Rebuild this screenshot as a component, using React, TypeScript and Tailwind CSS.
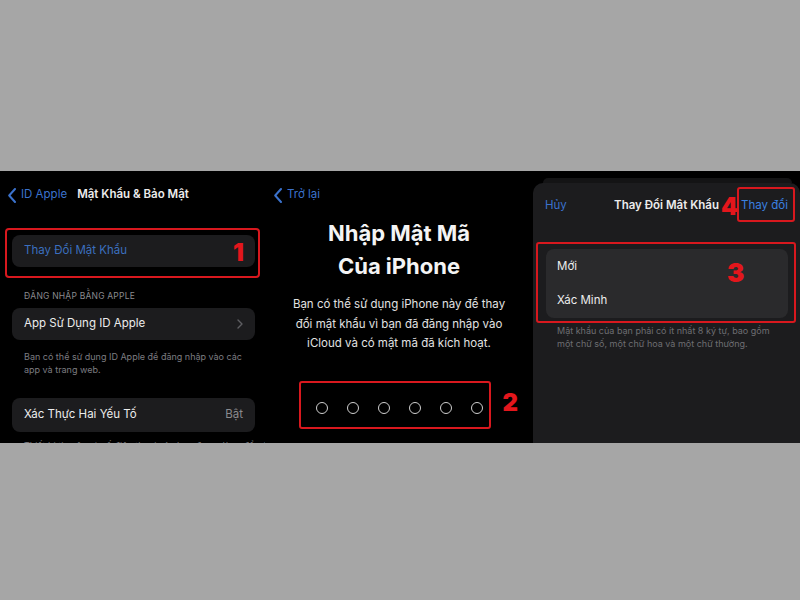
import React from 'react';

const font = { fontFamily: 'Inter, "Noto Sans", "Liberation Sans", sans-serif' };

const BackChevron: React.FC = () => (
  <svg width="8" height="15" viewBox="0 0 8 15" fill="none" className="shrink-0">
    <path d="M7 1 L1.2 7.5 L7 14" stroke="#3b72cc" strokeWidth="2" strokeLinecap="round" strokeLinejoin="round" />
  </svg>
);

const RowChevron: React.FC = () => (
  <svg width="6" height="10" viewBox="0 0 6 10" fill="none">
    <path d="M1 1 L5 5 L1 9" stroke="#5e5e62" strokeWidth="1.4" strokeLinecap="round" strokeLinejoin="round" />
  </svg>
);

// red step marker drawn over the screenshots
const Step: React.FC<{ n: string; className: string }> = ({ n, className }) => (
  <span className={`absolute font-black text-[#e3161c] leading-none ${className}`}>{n}</span>
);

const SettingsPanel: React.FC = () => (
  <div className="w-[265px] shrink-0 bg-black flex flex-col *:shrink-0">
    <div className="mt-[14px] h-[20px] flex items-center pl-[8px]">
      <BackChevron />
      <span className="ml-[5px] text-[11.5px] text-[#3b72cc]">ID Apple</span>
      <span className="ml-[10px] text-[11.5px] font-semibold text-[#ececec]">Mật Khẩu &amp; Bảo Mật</span>
    </div>

    <div className="relative mt-[30px] ml-[12px] w-[243px] h-[32px] rounded-[8px] bg-[#1c1c1e] flex items-center pl-[12px]">
      <span className="text-[11.5px] text-[#3b6fbf]">Thay Đổi Mật Khẩu</span>
      <div className="absolute -left-[7px] -top-[7px] -right-[5px] -bottom-[11px] border-2 border-[#d8181e] rounded-[4px]" />
      <Step n="1" className="left-[221px] top-[6px] text-[24px]" />
    </div>

    <div className="mt-[23px] pl-[24px] h-[12px] text-[8.5px] leading-[12px] tracking-wide text-[#8a8a8e]">ĐĂNG NHẬP BẰNG APPLE</div>

    <div className="mt-[6px] ml-[12px] w-[243px] h-[32px] rounded-[8px] bg-[#1c1c1e] flex items-center justify-between pl-[12px] pr-[12px]">
      <span className="text-[11.5px] text-[#ececec]">App Sử Dụng ID Apple</span>
      <RowChevron />
    </div>

    <p className="mt-[10px] pl-[24px] text-[9px] leading-[13px] text-[#7c7c80]">
      Bạn có thể sử dụng ID Apple để đăng nhập vào các
      <br />
      app và trang web.
    </p>

    <div className="mt-[22px] ml-[12px] w-[243px] h-[34px] rounded-[8px] bg-[#1c1c1e] flex items-center justify-between pl-[12px] pr-[12px]">
      <span className="text-[11.5px] text-[#ececec]">Xác Thực Hai Yếu Tố</span>
      <span className="text-[11.5px] text-[#8a8a8e]">Bật</span>
    </div>

    <p className="mt-[7px] pl-[24px] text-[9px] leading-[13px] text-[#7c7c80] whitespace-nowrap">
      Thiết bị tin cậy và số điện thoại của bạn được dùng để xác
    </p>
  </div>
);

const PasscodePanel: React.FC = () => (
  <div className="w-[268px] shrink-0 bg-black flex flex-col *:shrink-0">
    <div className="mt-[14px] h-[20px] flex items-center pl-[9px]">
      <BackChevron />
      <span className="ml-[5px] text-[11.5px] text-[#3b72cc]">Trở lại</span>
    </div>

    <h1 className="mt-[12px] text-center text-[22px] leading-[33px] font-bold text-[#f4f4f4]">
      Nhập Mật Mã
      <br />
      Của iPhone
    </h1>

    <p className="mt-[12px] text-center text-[11.5px] leading-[19.5px] text-[#e2e2e2]">
      Bạn có thể sử dụng iPhone này để thay
      <br />
      đổi mật khẩu vì bạn đã đăng nhập vào
      <br />
      iCloud và có mật mã đã kích hoạt.
    </p>

    <div className="relative mt-[48px] self-center flex gap-[19px]">
      {[0, 1, 2, 3, 4, 5].map((i) => (
        <span key={i} className="w-[12px] h-[12px] rounded-full border-[1.5px] border-[#cfcfcf]" />
      ))}
      <div className="absolute -left-[17px] -top-[21px] -right-[8px] -bottom-[15px] border-2 border-[#d8181e] rounded-[3px]" />
      <Step n="2" className="left-[187px] -top-[11px] text-[24px]" />
    </div>
  </div>
);

const ChangePasswordSheet: React.FC = () => (
  <div className="flex-1 bg-black flex flex-col pt-[7px]">
    <div className="ml-[10px] mr-[8px] h-[5px] rounded-t-[8px] bg-[#141415]" />
    <div className="flex-1 rounded-tl-[10px] rounded-tr-[10px] bg-[#1c1c1e] flex flex-col *:shrink-0">
      <div className="relative h-[45px] grid grid-cols-[1fr_auto_1fr] items-center px-[12px]">
        <span className="text-[11.5px] text-[#3b72cc]">Hủy</span>
        <span className="text-[11.5px] font-semibold text-[#ececec]">Thay Đổi Mật Khẩu</span>
        <span className="justify-self-end text-[11.5px] text-[#3a80e0]">Thay đổi</span>
        <div className="absolute left-[204px] top-[4px] w-[58px] h-[35px] border-2 border-[#d8181e] rounded-[3px]" />
        <Step n="4" className="left-[188px] top-[12px] text-[24px]" />
      </div>

      <div className="relative mt-[21px] ml-[13px] mr-[12px] h-[69px] rounded-[8px] bg-[#2a2a2c] flex flex-col pl-[11px]">
        <div className="h-[36px] flex items-center text-[11.5px] text-[#ececec]">Mới</div>
        <div className="h-[31px] flex items-center text-[11.5px] text-[#ececec]">Xác Minh</div>
        <div className="absolute -left-[10px] -top-[7px] -right-[8px] -bottom-[5px] border-2 border-[#d8181e] rounded-[3px]" />
        <Step n="3" className="left-[181px] top-[11px] text-[26px]" />
      </div>

      <p className="mt-[6px] pl-[24px] text-[9px] leading-[13px] text-[#6e6e72]">
        Mật khẩu của bạn phải có ít nhất 8 ký tự, bao gồm
        <br />
        một chữ số, một chữ hoa và một chữ thường.
      </p>
    </div>
  </div>
);

const App: React.FC = () => {
  return (
    <div className="w-[800px] h-[600px] bg-[#a6a6a6] flex flex-col" style={font}>
      <div className="h-[171px] shrink-0" />
      <div className="h-[272px] shrink-0 flex overflow-hidden bg-black">
        <SettingsPanel />
        <PasscodePanel />
        <ChangePasswordSheet />
      </div>
    </div>
  );
};

export default App;
